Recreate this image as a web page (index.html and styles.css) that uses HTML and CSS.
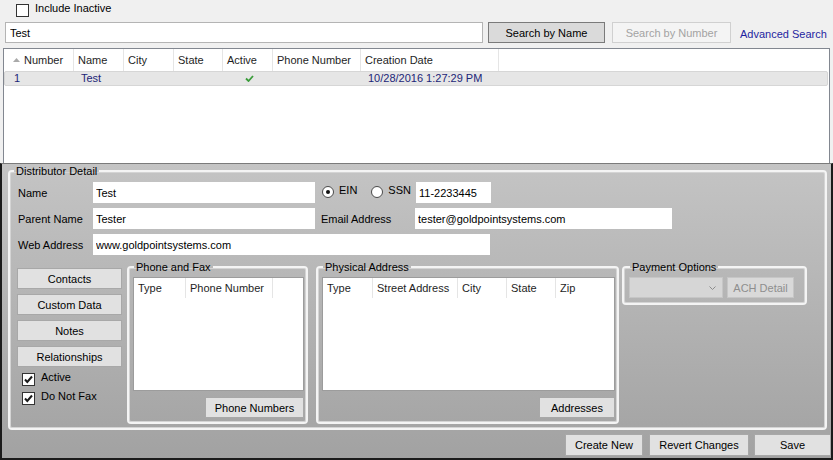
FILE: index.html
```html
<!DOCTYPE html>
<html lang="en">
<head>
    <meta charset="UTF-8">
    <title>Distributors</title>
    <link rel="stylesheet" href="styles.css">
</head>
<body>
    <div class="window">
        <div class="top">
            <div class="check-line inactive">
                <span class="checkbox"></span>
                <span class="check-text">Include Inactive</span>
            </div>
            <div class="search-bar">
                <input class="textbox search-box" type="text" value="Test">
                <button type="button" class="btn btn-default">Search by Name</button>
                <button type="button" class="btn btn-off search-number">Search by Number</button>
                <a class="link">Advanced Search</a>
            </div>
            <div class="grid">
                <div class="grid-head">
                    <div class="gcell c1 first"><svg class="sort" width="7" height="4" viewBox="0 0 7 4"><path d="M0 4L3.5 0L7 4Z" fill="#a9a9a9"/></svg>Number</div>
                    <div class="gcell c2">Name</div>
                    <div class="gcell c3">City</div>
                    <div class="gcell c4">State</div>
                    <div class="gcell c5">Active</div>
                    <div class="gcell c6">Phone Number</div>
                    <div class="gcell c7">Creation Date</div>
                </div>
                <div class="grid-row selected">
                    <div class="rcell c1 num">1</div>
                    <div class="rcell c2 name">Test</div>
                    <div class="rcell c3"></div>
                    <div class="rcell c4"></div>
                    <div class="rcell c5 tick"><svg width="9" height="7" viewBox="0 0 9 7"><path d="M1 3.5L3.5 6L8 1" stroke="#3a9c3a" stroke-width="1.8" fill="none"/></svg></div>
                    <div class="rcell c6"></div>
                    <div class="rcell c7 date">10/28/2016 1:27:29 PM</div>
                </div>
            </div>
        </div>

        <div class="bottom">
            <fieldset class="group detail">
                <legend>Distributor Detail</legend>
                <div class="form-row">
                    <span class="label">Name</span>
                    <input class="field w-name" type="text" value="Test">
                    <span class="radio ein"><span class="dot on"></span><span class="radio-text">EIN</span></span>
                    <span class="radio ssn"><span class="dot"></span><span class="radio-text">SSN</span></span>
                    <input class="field w-ssn" type="text" value="11-2233445">
                </div>
                <div class="form-row">
                    <span class="label">Parent Name</span>
                    <input class="field w-name" type="text" value="Tester">
                    <span class="label email-label">Email Address</span>
                    <input class="field w-email" type="text" value="tester@goldpointsystems.com">
                </div>
                <div class="form-row">
                    <span class="label">Web Address</span>
                    <input class="field w-web" type="text" value="www.goldpointsystems.com">
                </div>

                <div class="lower">
                    <div class="side">
                        <button type="button" class="btn">Contacts</button>
                        <button type="button" class="btn">Custom Data</button>
                        <button type="button" class="btn">Notes</button>
                        <button type="button" class="btn">Relationships</button>
                        <div class="checks">
                            <div class="check-line">
                                <span class="checkbox"><svg width="11" height="11" viewBox="0 0 11 11"><path d="M2 5.5L4.3 8L9 2.5" stroke="#1a1a1a" stroke-width="2" fill="none"/></svg></span>
                                <span class="check-text">Active</span>
                            </div>
                            <div class="check-line">
                                <span class="checkbox"><svg width="11" height="11" viewBox="0 0 11 11"><path d="M2 5.5L4.3 8L9 2.5" stroke="#1a1a1a" stroke-width="2" fill="none"/></svg></span>
                                <span class="check-text">Do Not Fax</span>
                            </div>
                        </div>
                    </div>

                    <fieldset class="group box phone">
                        <legend>Phone and Fax</legend>
                        <div class="list">
                            <div class="list-head">
                                <div class="lcell p1">Type</div>
                                <div class="lcell p2">Phone Number</div>
                            </div>
                        </div>
                        <div class="box-actions">
                            <button type="button" class="btn phone-btn">Phone Numbers</button>
                        </div>
                    </fieldset>

                    <fieldset class="group box address">
                        <legend>Physical Address</legend>
                        <div class="list">
                            <div class="list-head">
                                <div class="lcell a1">Type</div>
                                <div class="lcell a2">Street Address</div>
                                <div class="lcell a3">City</div>
                                <div class="lcell a4">State</div>
                                <div class="lcell a5 last">Zip</div>
                            </div>
                        </div>
                        <div class="box-actions">
                            <button type="button" class="btn address-btn">Addresses</button>
                        </div>
                    </fieldset>

                    <fieldset class="group payment">
                        <legend>Payment Options</legend>
                        <div class="pay-row">
                            <div class="combo"><svg width="7" height="4" viewBox="0 0 7 4"><path d="M0.5 0.5L3.5 3.5L6.5 0.5" stroke="#8c8c8c" stroke-width="1" fill="none"/></svg></div>
                            <button type="button" class="btn btn-dim ach">ACH Detail</button>
                        </div>
                    </fieldset>
                </div>
            </fieldset>

            <div class="actions">
                <button type="button" class="btn create">Create New</button>
                <button type="button" class="btn revert">Revert Changes</button>
                <button type="button" class="btn save">Save</button>
            </div>
        </div>
    </div>
</body>
</html>
```

FILE: styles.css
```css
body {
    margin: 0;
    font-family: "Liberation Sans", Arial, sans-serif;
    font-size: 11px;
    color: #000000;
}
.window {
    width: 833px;
    height: 460px;
    display: flex;
    flex-direction: column;
}

/* top search area */
.top {
    height: 163px;
    background-color: #f0f0f0;
    display: flex;
    flex-direction: column;
    box-sizing: border-box;
    padding-top: 1px;
}
.check-line {
    display: flex;
    align-items: flex-start;
    gap: 6px;
    line-height: 14px;
}
.checkbox {
    width: 13px;
    height: 13px;
    box-sizing: border-box;
    border: 1px solid #333333;
    background-color: #ffffff;
    margin-top: 3px;
    display: flex;
    align-items: center;
    justify-content: center;
}
.inactive {
    height: 18px;
    margin-left: 16px;
}
.search-bar {
    display: flex;
    align-items: center;
    height: 21px;
    margin-top: 3px;
}
input {
    font: inherit;
    color: #000000;
    margin: 0;
    outline: none;
}
.textbox {
    box-sizing: border-box;
    height: 21px;
    border: 1px solid #b4b4b4;
    background-color: #ffffff;
    padding: 0 4px;
}
.search-box {
    width: 478px;
    margin-left: 5px;
}
.btn {
    font: inherit;
    color: #000000;
    height: 21px;
    box-sizing: border-box;
    border: 1px solid #a8a8a8;
    background-color: #e1e1e1;
    padding: 0;
    margin: 0;
}
.btn-default {
    width: 117px;
    margin-left: 5px;
    background-color: #dadada;
    border-color: #7a7a7a;
}
.btn-off {
    background-color: #f4f4f4;
    border-color: #d0d0d0;
    color: #a3a3a3;
}
.search-number {
    width: 119px;
    margin-left: 7px;
}
.link {
    margin-left: 9px;
    color: #1f1fa0;
    line-height: 14px;
    padding-top: 3px;
}

/* results grid */
.grid {
    margin: 5px 0 0 3px;
    width: 827px;
    flex: 1;
    background-color: #ffffff;
    border: 1px solid #828790;
    border-bottom: none;
    box-sizing: border-box;
}
.grid-head, .grid-row {
    display: flex;
}
.gcell {
    height: 22px;
    line-height: 22px;
    box-sizing: border-box;
    border-right: 1px solid #e5e5e5;
    padding-left: 4px;
    color: #1e1e1e;
    white-space: nowrap;
}
.first {
    padding-left: 9px;
    display: flex;
    align-items: center;
    gap: 4px;
}
.c1 { width: 70px; }
.c2 { width: 50px; }
.c3 { width: 50px; }
.c4 { width: 49px; }
.c5 { width: 50px; }
.c6 { width: 88px; }
.c7 { width: 138px; }
.grid-row {
    height: 15px;
    box-sizing: border-box;
    margin-right: 1px;
}
.selected {
    background-color: #e6e6e6;
    border: 1px solid #d6d6d6;
    border-radius: 2px;
}
.rcell {
    line-height: 13px;
    color: #1c2578;
    white-space: nowrap;
    box-sizing: border-box;
}
.num { padding-left: 9px; }
.name { padding-left: 6px; }
.date { padding-left: 6px; }
.tick {
    display: flex;
    align-items: center;
    justify-content: center;
}

/* detail panel */
.bottom {
    flex: 1;
    display: flex;
    flex-direction: column;
    border: 2px solid #1b1b1b;
    border-top: 1px solid #7b7b7b;
    background: linear-gradient(#c4c4c4, #a2a2a2);
    padding-left: 6px;
}
.group {
    margin: 0;
    min-width: 0;
    box-sizing: border-box;
    border: 2px solid #f4f4f4;
    border-radius: 4px;
    box-shadow: inset 0 0 0 1px #d4d4d4;
}
.group legend {
    padding: 0 2px;
    line-height: 14px;
    margin-left: 1px;
}
.detail {
    width: 819px;
    height: 266px;
    padding: 4px 8px 0 8px;
}
.detail > legend {
    margin-left: -4px;
}
.form-row {
    display: flex;
    align-items: center;
    height: 21px;
    margin-bottom: 5px;
}
.label {
    width: 75px;
    white-space: nowrap;
}
.field {
    box-sizing: border-box;
    height: 21px;
    border: none;
    background-color: #ffffff;
    padding: 0 3px;
}
.w-name { width: 222px; }
.w-ssn { width: 75px; margin-left: 5px; }
.w-email { width: 257px; }
.w-web { width: 397px; }
.email-label {
    width: 94px;
    margin-left: 6px;
}
.radio {
    display: flex;
    align-items: flex-start;
    gap: 5px;
    height: 21px;
}
.ein { margin-left: 7px; }
.ssn { margin-left: 14px; }
.radio-text {
    line-height: 14px;
    margin-top: 1px;
}
.dot {
    width: 12px;
    height: 12px;
    box-sizing: border-box;
    border: 1px solid #4a4a4a;
    border-radius: 50%;
    background-color: #ffffff;
    margin-top: 4px;
    display: flex;
    align-items: center;
    justify-content: center;
}
.dot.on::after {
    content: "";
    width: 4px;
    height: 4px;
    border-radius: 50%;
    background-color: #111111;
}

.lower {
    display: flex;
    align-items: flex-start;
    margin-top: 1px;
}
.side {
    width: 105px;
    margin: 8px 0 0 -1px;
    display: flex;
    flex-direction: column;
    gap: 5px;
}
.checks {
    margin-top: -2px;
    padding-left: 5px;
}
.checks .check-line {
    height: 19px;
}
.box {
    height: 164px;
    padding: 3px 2px 0 4px;
    display: flex;
    flex-direction: column;
}
.phone {
    width: 181px;
    margin-left: 5px;
}
.address {
    width: 303px;
    margin-left: 8px;
}
.list {
    height: 114px;
    box-sizing: border-box;
    border: 1px solid #9c9c9c;
    background-color: #ffffff;
}
.list-head {
    display: flex;
    height: 20px;
}
.lcell {
    line-height: 20px;
    box-sizing: border-box;
    border-right: 1px solid #e5e5e5;
    padding-left: 4px;
    color: #1e1e1e;
    white-space: nowrap;
}
.p1 { width: 52px; }
.p2 { width: 87px; }
.a1 { width: 50px; }
.a2 { width: 85px; }
.a3 { width: 49px; }
.a4 { width: 49px; }
.a5 { width: 50px; }
.last { border-right: none; }
.box-actions {
    display: flex;
    justify-content: flex-end;
    margin-top: 6px;
}
.phone-btn { width: 99px; }
.address-btn { width: 76px; }
.payment {
    width: 185px;
    height: 45px;
    margin-left: 3px;
    padding: 3px 4px 0 5px;
}
.pay-row {
    display: flex;
    gap: 4px;
}
.combo {
    width: 94px;
    height: 21px;
    box-sizing: border-box;
    border: 1px solid #c6c6c6;
    background-color: #d6d6d6;
    display: flex;
    align-items: center;
    justify-content: flex-end;
    padding-right: 6px;
}
.btn-dim {
    background-color: #d9d9d9;
    border-color: #c6c6c6;
    color: #8e8e8e;
}
.ach { width: 67px; }

.actions {
    display: flex;
    justify-content: flex-end;
    margin-top: 4px;
}
.actions .btn {
    height: 22px;
}
.create { width: 78px; }
.revert { width: 100px; margin-left: 6px; }
.save { width: 77px; margin-left: 5px; }
```
